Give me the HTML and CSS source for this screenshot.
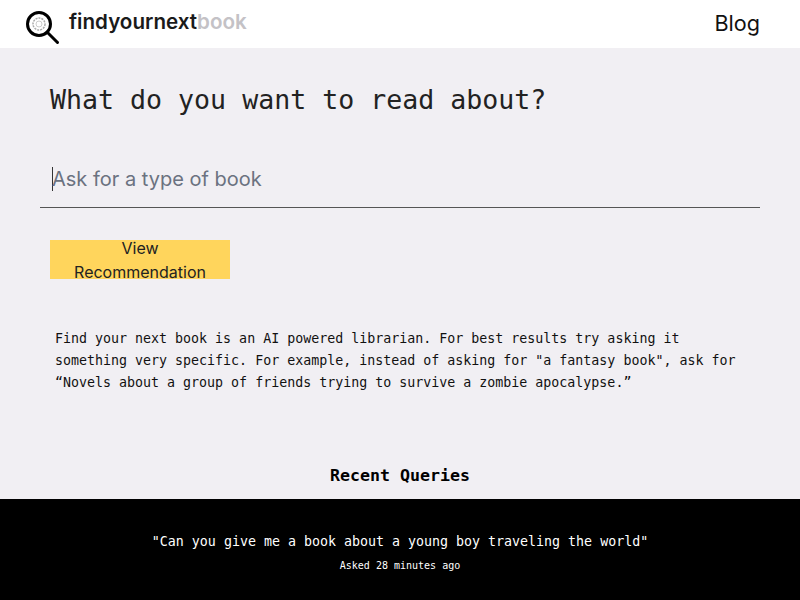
FILE: index.html
```html
<!DOCTYPE html>
<html lang="en">
<head>
    <meta charset="UTF-8">
    <meta name="viewport" content="width=device-width, initial-scale=1.0">
    <title>Find your next book</title>
    <link rel="stylesheet" href="styles.css">
</head>

<body>
    <header class="navbar">
        <a href="#" class="brand">
            <svg class="brand-icon" width="36" height="36" viewBox="0 0 36 36" fill="none">
                <circle cx="15" cy="15" r="11.5" stroke="#000" stroke-width="3"/>
                <path d="M23 23L33.5 33.5" stroke="#000" stroke-width="3" stroke-linecap="round"/>
                <circle cx="15" cy="15" r="6" stroke="#aaa" stroke-width="1.5" stroke-dasharray="2 1"/>
                <circle cx="15" cy="15" r="3" stroke="#ccc" stroke-width="1"/>
            </svg>
            <span class="brand-name">findyournext<span class="brand-light">book</span></span>
        </a>
        <a href="#" class="nav-link">Blog</a>
    </header>

    <main class="content">
        <h1>What do you want to read about?</h1>
        <div class="search">
            <span class="caret"></span>
            <input type="text" placeholder="Ask for a type of book">
        </div>
        <button class="submit">View Recommendation</button>
        <p class="intro">Find your next book is an AI powered librarian. For best results try asking it something very specific. For example, instead of asking for "a fantasy book", ask for “Novels about a group of friends trying to survive a zombie apocalypse.”</p>
        <h2>Recent Queries</h2>
    </main>

    <section class="queries">
        <p class="query">"Can you give me a book about a young boy traveling the world"</p>
        <p class="asked">Asked 28 minutes ago</p>
    </section>
</body>
</html>
```

FILE: styles.css
```css
html, body {
    height: 100%;
}

body {
    font-family: "Inter", sans-serif;
    background-color: #f1eff3;
    color: #111;
    margin: 0;
    overflow: hidden;
}

/* top bar */
.navbar {
    display: flex;
    justify-content: space-between;
    align-items: flex-start;
    height: 48px;
    padding: 0 40px 0 24px;
    background-color: #fff;
}

.brand {
    display: flex;
    align-items: flex-start;
    height: 48px;
    gap: 9px;
    text-decoration: none;
    color: #1a1a1a;
}

.brand-icon {
    margin-top: 9px;
}

.brand-name {
    font-size: 20.6px;
    font-weight: 600;
    line-height: 24px;
    margin-top: 10px;
}

.brand-light {
    color: #c4c2c6;
}

.nav-link {
    font-size: 21.6px;
    font-weight: 400;
    line-height: 28px;
    margin-top: 9px;
    color: #111;
    text-decoration: none;
}

/* main column */
.content {
    height: 451px;
    padding: 0 40px;
    box-sizing: border-box;
}

h1 {
    font-family: "DejaVu Sans Mono", monospace;
    font-size: 26.6px;
    font-weight: 400;
    line-height: 36px;
    color: #222;
    margin: 0;
    padding: 34px 10px 0;
}

.search {
    display: flex;
    align-items: center;
    height: 56px;
    margin-top: 33px;
    padding-left: 12px;
    border-bottom: 1px solid #555;
}

.caret {
    width: 1px;
    height: 24px;
    background-color: #333;
}

.search input {
    flex: 1;
    border: none;
    outline: none;
    padding: 0;
    margin-left: -1px;
    background: transparent;
    font-family: "Inter", sans-serif;
    font-size: 20px;
    color: #222;
}

.search input::placeholder {
    color: #6b7280;
    opacity: 1;
}

.submit {
    display: flex;
    align-items: center;
    justify-content: center;
    text-align: center;
    width: 180px;
    height: 39px;
    margin: 32px 0 0 10px;
    padding: 0 16px;
    border: none;
    background-color: #ffd55c;
    color: #222;
    font-family: "Inter", sans-serif;
    font-size: 16px;
    line-height: 24px;
}

.intro {
    font-family: "DejaVu Sans Mono", monospace;
    font-size: 13.3px;
    line-height: 22px;
    color: #111;
    margin: 49px 0 0;
    padding: 0 15px;
}

h2 {
    font-family: "DejaVu Sans Mono", monospace;
    font-size: 16.6px;
    font-weight: 700;
    line-height: 24px;
    color: #000;
    text-align: center;
    margin: 70px 0 0;
}

/* recent queries strip */
.queries {
    height: 101px;
    background-color: #000;
    color: #fff;
    text-align: center;
    font-family: "DejaVu Sans Mono", monospace;
    overflow: hidden;
}

.query {
    font-size: 13.3px;
    line-height: 20px;
    margin: 33px 0 0;
}

.asked {
    font-size: 10px;
    line-height: 16px;
    margin: 6px 0 0;
}
```
